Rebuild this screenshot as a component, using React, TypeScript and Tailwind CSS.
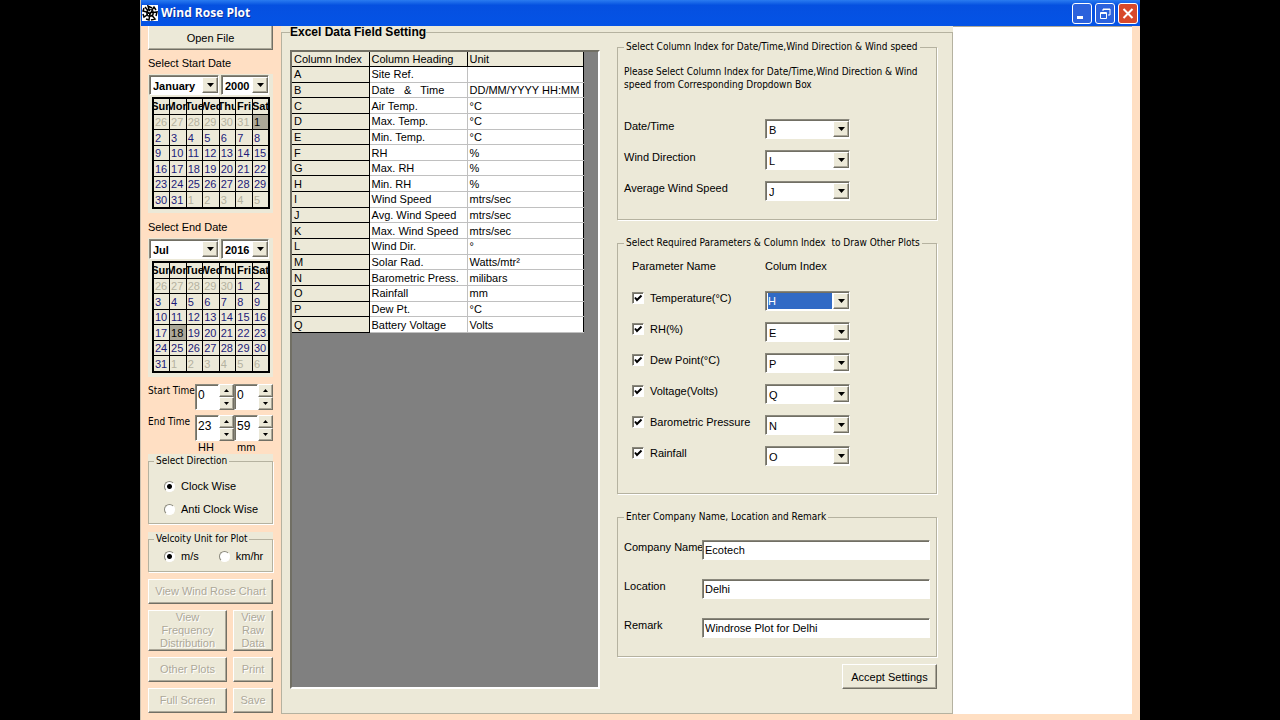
import React, { useState } from 'react';

const COLUMNS = [
  { index: 'A', heading: 'Site Ref.', unit: '' },
  { index: 'B', heading: 'Date   &   Time', unit: 'DD/MM/YYYY HH:MM' },
  { index: 'C', heading: 'Air Temp.', unit: '°C' },
  { index: 'D', heading: 'Max. Temp.', unit: '°C' },
  { index: 'E', heading: 'Min. Temp.', unit: '°C' },
  { index: 'F', heading: 'RH', unit: '%' },
  { index: 'G', heading: 'Max. RH', unit: '%' },
  { index: 'H', heading: 'Min. RH', unit: '%' },
  { index: 'I', heading: 'Wind Speed', unit: 'mtrs/sec' },
  { index: 'J', heading: 'Avg. Wind Speed', unit: 'mtrs/sec' },
  { index: 'K', heading: 'Max. Wind Speed', unit: 'mtrs/sec' },
  { index: 'L', heading: 'Wind Dir.', unit: '°' },
  { index: 'M', heading: 'Solar Rad.', unit: 'Watts/mtr²' },
  { index: 'N', heading: 'Barometric Press.', unit: 'milibars' },
  { index: 'O', heading: 'Rainfall', unit: 'mm' },
  { index: 'P', heading: 'Dew Pt.', unit: '°C' },
  { index: 'Q', heading: 'Battery Voltage', unit: 'Volts' },
];

const REQUIRED = [
  { label: 'Date/Time', value: 'B' },
  { label: 'Wind Direction', value: 'L' },
  { label: 'Average Wind Speed', value: 'J' },
];

const PARAMETERS = [
  { label: 'Temperature(°C)', value: 'H', active: true },
  { label: 'RH(%)', value: 'E' },
  { label: 'Dew Point(°C)', value: 'P' },
  { label: 'Voltage(Volts)', value: 'Q' },
  { label: 'Barometric Pressure', value: 'N' },
  { label: 'Rainfall', value: 'O' },
];

const COMPANY = [
  { label: 'Company Name', value: 'Ecotech' },
  { label: 'Location', value: 'Delhi' },
  { label: 'Remark', value: 'Windrose Plot for Delhi' },
];

const MONTHS = ['January', 'February', 'March', 'April', 'May', 'June', 'Jul', 'August', 'September', 'October', 'November', 'December'];
const YEARS = Array.from({ length: 17 }, (_, i) => String(2000 + i));
const WEEKDAYS = ['Sun', 'Mon', 'Tue', 'Wed', 'Thu', 'Fri', 'Sat'];
const LETTERS = COLUMNS.map((c) => c.index);

const raised = 'border border-t-white border-l-white border-b-[#716f64] border-r-[#716f64] shadow-[inset_-1px_-1px_0_#aca899] bg-[#ece9d8]';
const sunken = 'border border-t-[#8a887c] border-l-[#8a887c] border-b-white border-r-white shadow-[inset_1px_1px_0_#716f64] bg-white';
// narrower face for captions that have little room
const dense = "font-['DejaVu_Sans_Condensed','Open_Sans',sans-serif] text-[10px]";

const DropDown: React.FC<{ label: string; value: string; options: string[]; className?: string; active?: boolean }> = ({
  label,
  value,
  options,
  className = '',
  active = false,
}) => (
  <div className={`relative h-5 ${sunken} ${className}`}>
    <select
      aria-label={label}
      defaultValue={value}
      className={`block h-full w-full appearance-none outline-none ${
        active ? 'bg-[#316ac5] bg-clip-content py-px pr-[17px] pl-[2px] text-white' : 'bg-transparent pt-px pl-[3px]'
      }`}
    >
      {options.map((option) => (
        <option key={option}>{option}</option>
      ))}
    </select>
    <span className={`pointer-events-none absolute inset-y-px right-0 flex w-4 items-center justify-center ${raised}`}>
      <svg width="7" height="4" viewBox="0 0 7 4">
        <path d="M0 0h7L3.5 4z" fill="#000" />
      </svg>
    </span>
  </div>
);

const GroupBox: React.FC<{ title: string; className?: string; children: React.ReactNode }> = ({ title, className = '', children }) => (
  <div className="bg-[#ece9d8]">
    <fieldset className={`min-w-0 border border-[#b5b2a0] shadow-[1px_1px_0_#fff] ${className}`}>
      <legend className={`bg-[#ece9d8] px-[2px] leading-[14px] whitespace-pre ${dense}`}>{title}</legend>
      {children}
    </fieldset>
  </div>
);

const Calendar: React.FC<{ title: string; month: string; year: string; lead: number[]; days: number; trail: number; selected: number }> = ({
  title,
  month,
  year,
  lead,
  days,
  trail,
  selected,
}) => {
  const cells = [
    ...lead.map((day) => ({ day, current: false })),
    ...Array.from({ length: days }, (_, i) => ({ day: i + 1, current: true })),
    ...Array.from({ length: trail }, (_, i) => ({ day: i + 1, current: false })),
  ];
  const weeks = Array.from({ length: 6 }, (_, i) => cells.slice(i * 7, i * 7 + 7));

  return (
    <section>
      <h2>{title}</h2>
      <div className="mt-1 bg-[#ece9d8] pt-px pb-1">
        <div className="flex gap-[2px] pl-px font-bold">
          <DropDown label={`${title} month`} value={month} options={MONTHS} className="w-[70px]" />
          <DropDown label={`${title} year`} value={year} options={YEARS} className="w-[48px]" />
        </div>
        <table className="mt-[2px] ml-1 h-[112px] w-[118px] table-fixed border-collapse border-2 border-black">
          <thead>
            <tr>
              {WEEKDAYS.map((day) => (
                <th key={day} className="border border-black p-0">
                  <div className="flex justify-center overflow-hidden leading-[15px]">{day}</div>
                </th>
              ))}
            </tr>
          </thead>
          <tbody>
            {weeks.map((week, i) => (
              <tr key={i}>
                {week.map(({ day, current }) => (
                  <td
                    key={day}
                    className={`border border-black p-0 pl-px leading-[14px] ${
                      !current ? 'text-[#b5b2a0]' : day === selected ? 'bg-[#aca899] text-black' : 'text-[#1c1a78]'
                    }`}
                  >
                    {day}
                  </td>
                ))}
              </tr>
            ))}
          </tbody>
        </table>
      </div>
    </section>
  );
};

const Spinner: React.FC<{ label: string; initial: number; max: number }> = ({ label, initial, max }) => {
  const [value, setValue] = useState(initial);
  const step = (delta: number) => setValue((v) => Math.min(max, Math.max(0, v + delta)));

  return (
    <div className="flex h-[26px] w-[39px]">
      <input
        aria-label={label}
        value={value}
        onChange={(e) => setValue(Number(e.target.value) || 0)}
        className={`w-6 pb-[5px] pl-[2px] text-xs outline-none ${sunken}`}
      />
      <div className="flex w-[15px] flex-col">
        <button type="button" aria-label={`${label} up`} onClick={() => step(1)} className={`flex flex-1 items-center justify-center ${raised}`}>
          <svg width="5" height="3" viewBox="0 0 5 3"><path d="M0 3h5L2.5 0z" /></svg>
        </button>
        <button type="button" aria-label={`${label} down`} onClick={() => step(-1)} className={`flex flex-1 items-center justify-center ${raised}`}>
          <svg width="5" height="3" viewBox="0 0 5 3"><path d="M0 0h5L2.5 3z" /></svg>
        </button>
      </div>
    </div>
  );
};

const TimeRow: React.FC<{ label: string; hour: number; minute: number }> = ({ label, hour, minute }) => (
  <div className="grid grid-cols-[1fr_39px_39px]">
    <span className={`leading-[14px] whitespace-nowrap ${dense}`}>{label}</span>
    <Spinner label={`${label} hour`} initial={hour} max={23} />
    <Spinner label={`${label} minute`} initial={minute} max={59} />
  </div>
);

const Radio: React.FC<{ name: string; label: string; checked?: boolean }> = ({ name, label, checked }) => (
  <label className="flex items-center gap-[6px]">
    <input
      type="radio"
      name={name}
      defaultChecked={checked}
      className="h-[11px] w-[11px] appearance-none rounded-full border border-t-[#8a887c] border-r-white border-b-white border-l-[#8a887c] bg-white checked:bg-[radial-gradient(circle,#000_2px,#fff_3px)]"
    />
    {label}
  </label>
);

const SideButton: React.FC<{ className?: string; children: React.ReactNode }> = ({ className = '', children }) => (
  <button type="button" disabled className={`text-[#aca899] [text-shadow:1px_1px_0_#fff] ${raised} ${className}`}>
    {children}
  </button>
);

const Sidebar = () => (
  <aside className="w-[140px] shrink-0 pr-2 pl-[7px]">
    <button type="button" className={`h-6 w-full ${raised} border-t-0`}>Open File</button>
    <div className="mt-[6px] flex flex-col gap-[7px]">
      <Calendar title="Select Start Date" month="January" year="2000" lead={[26, 27, 28, 29, 30, 31]} days={31} trail={5} selected={1} />
      <Calendar title="Select End Date" month="Jul" year="2016" lead={[26, 27, 28, 29, 30]} days={31} trail={6} selected={18} />
    </div>
    <div className="mt-[7px] flex flex-col gap-[5px]">
      <TimeRow label="Start Time" hour={0} minute={0} />
      <TimeRow label="End Time" hour={23} minute={59} />
    </div>
    <div className="flex justify-end leading-3">
      <span className="w-[39px] pl-[3px]">HH</span>
      <span className="w-[39px] pl-[3px]">mm</span>
    </div>
    <div className="mt-px flex flex-col gap-2">
      <GroupBox title="Select Direction" className="px-[5px] pb-[7px]">
        <div className="flex flex-col gap-[9px] pt-[11px] pl-[10px]">
          <Radio name="direction" label="Clock Wise" checked />
          <Radio name="direction" label="Anti Clock Wise" />
        </div>
      </GroupBox>
      <GroupBox title="Velcoity Unit for Plot" className="px-[5px] pb-2">
        <div className="flex gap-5 pt-[3px] pl-[10px]">
          <Radio name="velocity" label="m/s" checked />
          <Radio name="velocity" label="km/hr" />
        </div>
      </GroupBox>
    </div>
    <div className="mt-[7px] grid grid-cols-[79px_1fr] gap-[6px] leading-[13px]">
      <SideButton className="col-span-2 h-[25px]">View Wind Rose Chart</SideButton>
      <SideButton className="h-[41px] px-2">View Frequency Distribution</SideButton>
      <SideButton className="h-[41px] px-1">View Raw Data</SideButton>
      <SideButton className="h-[25px]">Other Plots</SideButton>
      <SideButton className="h-[25px]">Print</SideButton>
      <SideButton className="h-[25px]">Full Screen</SideButton>
      <SideButton className="h-[25px]">Save</SideButton>
    </div>
  </aside>
);

const FieldTable = () => (
  <div className="mt-3 flex-1 border-2 border-t-[#716f64] border-r-white border-b-white border-l-[#716f64] bg-[#808080]">
    <table className="h-[281px] w-[292px] table-fixed border-collapse border-r border-b border-black text-left">
      <colgroup>
        <col className="w-[77px]" />
        <col className="w-[98px]" />
        <col />
      </colgroup>
      <thead>
        <tr className="bg-[#ece9d8] leading-[14px]">
          <th className="border-r border-b border-black p-0 pl-[2px] font-normal">Column Index</th>
          <th className="border-r border-b border-black p-0 pl-[2px] font-normal">Column Heading</th>
          <th className="border-b border-black p-0 pl-[2px] font-normal">Unit</th>
        </tr>
      </thead>
      <tbody>
        {COLUMNS.map((column) => (
          <tr key={column.index} className="bg-white leading-[14px]">
            <td className="border-r border-b border-black bg-[#ece9d8] p-0 pl-[2px]">{column.index}</td>
            <td className="border-r border-b border-[#c0c0c0] p-0 pl-[2px] whitespace-pre">{column.heading}</td>
            <td className="border-b border-[#c0c0c0] p-0 pl-[2px] whitespace-nowrap">{column.unit}</td>
          </tr>
        ))}
      </tbody>
    </table>
  </div>
);

const Settings = () => (
  <div className="w-[320px] shrink-0 pt-[2px]">
    <div className="flex flex-col gap-4">
      <GroupBox title="Select Column Index for Date/Time,Wind Direction & Wind speed" className="px-[6px] pb-[18px]">
        <p className={`mt-[11px] mb-7 leading-[13px] ${dense}`}>
          Please Select Column Index for Date/Time,Wind Direction &amp; Wind speed from Corresponding Dropdown Box
        </p>
        <div className="flex flex-col gap-[11px]">
          {REQUIRED.map((row) => (
            <div key={row.label} className="flex items-start">
              <span className="w-[141px]">{row.label}</span>
              <DropDown label={row.label} value={row.value} options={LETTERS} className="w-[85px]" />
            </div>
          ))}
        </div>
      </GroupBox>
      <GroupBox title="Select Required Parameters & Column Index  to Draw Other Plots" className="px-[6px] pb-[27px]">
        <div className="mt-[9px] mb-[18px] flex pl-2">
          <span className="w-[133px]">Parameter Name</span>
          <span>Colum Index</span>
        </div>
        <div className="flex flex-col gap-[11px] pl-2">
          {PARAMETERS.map((row) => (
            <div key={row.label} className="flex items-start">
              <label className="flex w-[133px] items-center gap-[6px]">
                <span className="relative h-3 w-3">
                  <input
                    type="checkbox"
                    defaultChecked
                    className={`peer block h-3 w-3 appearance-none ${sunken}`}
                  />
                  <svg className="pointer-events-none absolute inset-0 hidden peer-checked:block" width="12" height="12" viewBox="0 0 12 12">
                    <path d="M3 5.5l2 2.5 4.500-4.500" fill="none" stroke="#000" strokeWidth="2" />
                  </svg>
                </span>
                {row.label}
              </label>
              <DropDown label={row.label} value={row.value} options={LETTERS} active={row.active} className="w-[85px]" />
            </div>
          ))}
        </div>
      </GroupBox>
      <GroupBox title="Enter Company Name, Location and Remark" className="px-[6px] pb-[18px]">
        <div className="flex flex-col gap-[19px] pt-4">
          {COMPANY.map((row) => (
            <label key={row.label} className="flex items-start">
              <span className="w-[78px] whitespace-nowrap">{row.label}</span>
              <input defaultValue={row.value} className={`h-5 min-w-0 flex-1 px-[2px] outline-none ${sunken}`} />
            </label>
          ))}
        </div>
      </GroupBox>
    </div>
    <div className="mt-[7px] flex justify-end">
      <button type="button" className={`h-[25px] w-[95px] ${raised}`}>Accept Settings</button>
    </div>
  </div>
);

const TitleBar = () => (
  <header className="flex h-[26px] items-center bg-linear-to-b from-[#2a7bf0] via-[#0550e0] via-20% to-[#0453e6] pr-[2px] pl-px text-white">
    <svg width="16" height="16" viewBox="0 0 16 16">
      <path d="M0 0h16v16H0z" fill="#fff" />
      <circle cx="8" cy="8" r="4" fill="#222" />
      <g fill="none" stroke="#000" strokeWidth="1.500">
        <path d="M8 8L6 1l4 2M8 8l4-6 2 3M8 8l7-1-1 4M8 8l5 6-4 1M8 8l-1 7-3-1M8 8l-6 4-1-3M8 8L1 6l1-3M8 8L3 2" />
      </g>
      <path d="M6 6l2 1 1-2M10 8l-1 2M6 9l1 1" stroke="#fff" strokeWidth="1" fill="none" />
    </svg>
    <h1 className="ml-[3px] flex-1 font-['Open_Sans',sans-serif] text-xs font-bold [text-shadow:1px_1px_0_#0a2f9c]">Wind Rose Plot</h1>
    <div className="flex gap-[3px]">
      <button type="button" aria-label="Minimize" className="h-[21px] w-5 rounded-[3px] border border-white bg-[#2c62dc]">
        <svg viewBox="0 0 18 19"><path d="M4 12h6v3H4z" fill="#fff" /></svg>
      </button>
      <button type="button" aria-label="Restore" className="h-[21px] w-5 rounded-[3px] border border-white bg-[#2c62dc]">
        <svg viewBox="0 0 18 19" fill="none" stroke="#fff">
          <path d="M7 7V5h7v6h-2M7 5.500h7" />
          <path d="M4.500 8.500h6v6h-6zM4.500 9.500h6" />
        </svg>
      </button>
      <button type="button" aria-label="Close" className="h-[21px] w-5 rounded-[3px] border border-white bg-[#d8492a]">
        <svg viewBox="0 0 18 19"><path d="M4.500 5l9 9M13.500 5l-9 9" stroke="#fff" strokeWidth="2" /></svg>
      </button>
    </div>
  </header>
);

export default function App() {
  return (
    <div className="flex min-h-screen bg-black px-[140px] font-['Liberation_Sans',sans-serif] text-[11px] leading-[14px] text-black">
      <div className="flex min-w-0 flex-1 flex-col border-l border-[#c9c0b0] bg-[#ffdfc3]">
        <TitleBar />
        <div className="flex flex-1 pb-[7px]">
          <Sidebar />
          <main className="flex flex-1 bg-[#ece9d8]">
            <fieldset className="flex flex-1 gap-[17px] border border-[#b5b2a0] pr-[15px] pb-6 pl-2">
              <legend className="bg-[#ece9d8] text-xs leading-3 font-bold">Excel Data Field Setting</legend>
              <FieldTable />
              <Settings />
            </fieldset>
          </main>
          <div className="mr-2 w-[179px] border-t border-[#aca899] bg-white" />
        </div>
      </div>
    </div>
  );
}
